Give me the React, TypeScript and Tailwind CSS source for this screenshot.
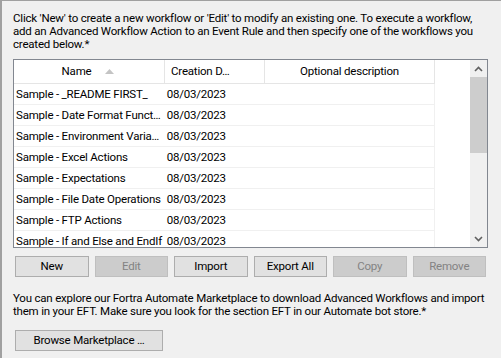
import React from 'react';

const rows = [
  'Sample - _README FIRST_',
  'Sample - Date Format Funct…',
  'Sample - Environment Varia…',
  'Sample - Excel Actions',
  'Sample - Expectations',
  'Sample - File Date Operations',
  'Sample - FTP Actions',
  'Sample - If and Else and EndIf',
];

const buttons = [
  { label: 'New', enabled: true },
  { label: 'Edit', enabled: false },
  { label: 'Import', enabled: true },
  { label: 'Export All', enabled: true },
  { label: 'Copy', enabled: false },
  { label: 'Remove', enabled: false },
];

const Chevron: React.FC<{ down?: boolean }> = ({ down }) => (
  <svg width="9" height="6" viewBox="0 0 9 6" className={down ? 'rotate-180' : ''}>
    <path d="M1 5 L4.5 1.5 L8 5" fill="none" stroke="#606060" strokeWidth="1.6" />
  </svg>
);

export default function App() {
  return (
    <div
      className="w-[501px] h-[358px] overflow-hidden bg-[#f0f0f0] border-t border-l-2 border-[#a0a0a0] text-[11.5px] leading-[13px] tracking-[-0.2px] text-black"
      style={{ fontFamily: 'Roboto, "Noto Sans", sans-serif' }}
    >
      {/* Intro text */}
      <p className="pl-[11px] pt-[11px] whitespace-nowrap">
        Click 'New' to create a new workflow or 'Edit' to modify an existing one. To execute a workflow,
        <br />
        add an Advanced Workflow Action to an Event Rule and then specify one of the workflows you
        <br />
        created below.*
      </p>

      {/* Workflow list */}
      <div className="ml-[11px] mt-[8px] w-[475px] h-[189px] border border-[#828790] bg-white flex overflow-hidden">
        <div className="flex-1 overflow-hidden">
          <div className="flex h-[24px] border-b border-[#e5e5e5] w-[421px]">
            <div className="w-[151px] border-r border-[#e5e5e5] flex items-center justify-center gap-[14px] pr-[2px]">
              <span>Name</span>
              <svg width="9" height="5" viewBox="0 0 9 5">
                <path d="M0 5 L4.5 0 L9 5 Z" fill="#c4c4c4" />
              </svg>
            </div>
            <div className="w-[100px] border-r border-[#e5e5e5] flex items-center pl-[6px] whitespace-nowrap overflow-hidden">
              Creation D…
            </div>
            <div className="w-[170px] border-r border-[#e5e5e5] flex items-center justify-center">
              Optional description
            </div>
          </div>
          {rows.map((name) => (
            <div key={name} className="flex h-[21px] w-[421px] border-b border-r border-[#f0f0f0] items-center">
              <div className="w-[151px] pl-[2px] whitespace-nowrap overflow-hidden">{name}</div>
              <div className="w-[100px] pl-[2px] whitespace-nowrap">08/03/2023</div>
              <div className="w-[170px]" />
            </div>
          ))}
        </div>
        {/* Scrollbar */}
        <div className="w-[17px] bg-[#f0f0f0] flex flex-col">
          <div className="h-[17px] flex items-center justify-center">
            <Chevron />
          </div>
          <div className="h-[76px] bg-[#cdcdcd]" />
          <div className="flex-1" />
          <div className="h-[17px] flex items-center justify-center">
            <Chevron down />
          </div>
        </div>
      </div>

      {/* Buttons */}
      <div className="ml-[13px] mt-[8px] w-[471px] grid grid-cols-6 gap-[6px]">
        {buttons.map((b) => (
          <div
            key={b.label}
            className={
              b.enabled
                ? 'h-[21px] flex items-center justify-center border border-[#adadad] bg-[#e1e1e1] text-black'
                : 'h-[21px] flex items-center justify-center border border-[#bfbfbf] bg-[#cccccc] text-[#838383]'
            }
          >
            {b.label}
          </div>
        ))}
      </div>

      {/* Marketplace text */}
      <p className="pl-[11px] mt-[15px] whitespace-nowrap">
        You can explore our Fortra Automate Marketplace to download Advanced Workflows and import
        <br />
        them in your EFT. Make sure you look for the section EFT in our Automate bot store.*
      </p>

      <div className="ml-[13px] mt-[12px] w-[148px] h-[21px] flex items-center justify-center border border-[#adadad] bg-[#e1e1e1]">
        Browse Marketplace …
      </div>
    </div>
  );
}
